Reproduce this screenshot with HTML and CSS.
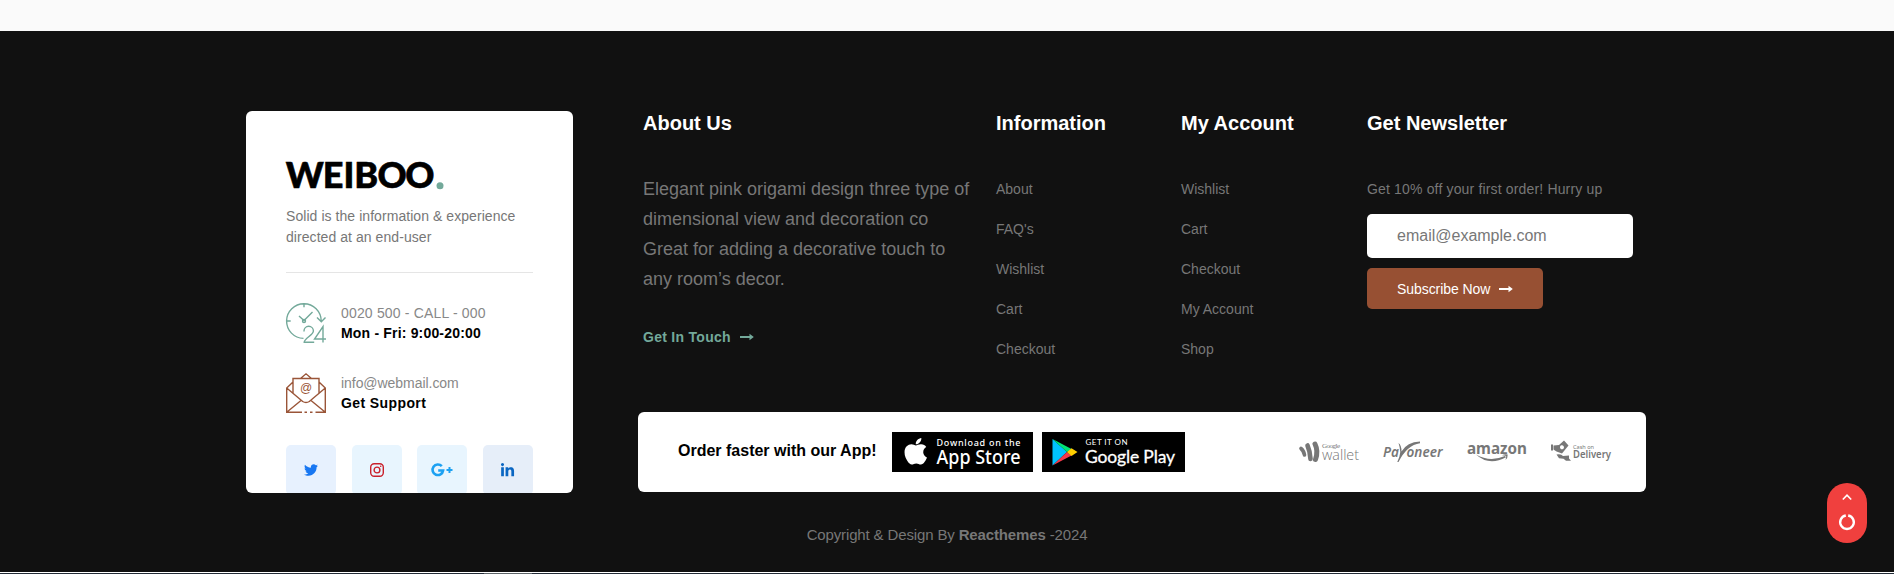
FILE: index.html
```html
<!DOCTYPE html>
<html lang="en">
<head>
<meta charset="utf-8">
<title>Weiboo</title>
<link rel="stylesheet" href="styles.css">
</head>
<body>
<footer class="footer">
  <div class="footer-inner">
    <aside class="contact-card">
      <svg class="logo" width="158" height="28" viewBox="0 0 158 28" role="img" aria-label="Weiboo">
        <text class="logo-text" x="-0.3 36.800 57.600 68.200 91.500 119.300" y="26.300">WEIBOO</text>
        <circle cx="154" cy="23.7" r="3.5" fill="#73a99a"/>
      </svg>
      <p class="tagline">Solid is the information &amp; experience directed at an end-user</p>
      <div class="contact-row">
        <svg class="contact-icon clock" width="40" height="40" viewBox="0 0 40 40">
          <path d="M17.5 35.4A17.3 17.3 0 1 1 35.2 18M31 14.5l4.3 4.2 4.2-4.2M18 .7v3.6M.7 18h4M13 13l5 4.5 8.500-8.500M18 28.500v-.5a4.700 4.700 0 0 1 9.400 0c0 4-9.200 7.500-9.200 11.300h10M37 39.500V23.500l-8.500 12.500H40"/>
          <circle cx="18" cy="18" r="1.500"/>
        </svg>
        <div class="contact-text"><span>0020 500 - CALL - 000</span><strong>Mon - Fri: 9:00-20:00</strong></div>
      </div>
      <div class="contact-row">
        <svg class="contact-icon mail" width="40" height="40" viewBox="0 0 40 40">
          <path d="M14.500 5.500 20 .8l5.500 4.700M7 20V5.500h26V20M7 9 .7 15v24.300H14M33 9l6.300 6v24.300H32M.7 15l16 13.500q3.300 2 6.600 0l16-13.500M.7 39.300 15 27.500M39.300 39.300 25 27.500M14 39.300h2M18.500 39.300h2.500M24 39.300h2.500M29.500 39.300h2.500"/>
          <text class="at" x="20" y="18.700" text-anchor="middle">@</text>
        </svg>
        <div class="contact-text support"><span>info@webmail.com</span><strong>Get Support</strong></div>
      </div>
      <div class="socials">
        <a class="social twitter"><svg width="14" height="14" viewBox="0 0 512 512"><path fill="#1877f2" d="M459.370 151.716c.325 4.548.325 9.097.325 13.645 0 138.720-105.583 298.558-298.558 298.558-59.452 0-114.680-17.219-161.137-47.106 8.447.974 16.568 1.299 25.340 1.299 49.055 0 94.213-16.568 130.274-44.832-46.132-.975-84.792-31.188-98.112-72.772 6.498.974 12.995 1.624 19.818 1.624 9.421 0 18.843-1.300 27.614-3.573-48.081-9.747-84.143-51.980-84.143-102.985v-1.299c13.969 7.797 30.214 12.670 47.431 13.319-28.264-18.843-46.781-51.005-46.781-87.391 0-19.492 5.197-37.360 14.294-52.954 51.655 63.675 129.300 105.258 216.365 109.807-1.624-7.797-2.599-15.918-2.599-24.040 0-57.828 46.782-104.934 104.934-104.934 30.213 0 57.502 12.670 76.670 33.137 23.715-4.548 46.456-13.320 66.599-25.340-7.798 24.366-24.366 44.833-46.132 57.827 21.117-2.273 41.584-8.122 60.426-16.243-14.292 20.791-32.161 39.308-52.628 54.253z"/></svg></a>
        <a class="social instagram"><svg width="14" height="14" viewBox="0 0 14 14" fill="none" stroke="#c9202b" stroke-width="1.400"><rect x=".7" y=".7" width="12.600" height="12.600" rx="3.500"/><circle cx="7" cy="7" r="2.900"/><circle cx="10.700" cy="3.300" r=".8" fill="#c9202b" stroke="none"/></svg></a>
        <a class="social google"><svg width="22" height="14" viewBox="0 0 22 14" fill="none" stroke="#1da1f2"><path stroke-width="2.600" d="M10.800 3.200A5.300 5.300 0 1 0 12.100 7.500H7.200"/><path stroke-width="2" d="M18.500 4v6M15.500 7h6"/></svg></a>
        <a class="social linkedin"><svg width="15" height="15" viewBox="0 0 448 512"><path fill="#0a66c2" d="M100.280 448H7.400V148.900h92.880zM53.790 108.100C24.090 108.100 0 83.500 0 53.800a53.790 53.790 0 0 1 107.580 0c0 29.700-24.100 54.300-53.790 54.300zM447.900 448h-92.680V302.400c0-34.700-.7-79.200-48.290-79.200-48.290 0-55.690 37.700-55.690 76.700V448h-92.780V148.900h89.080v40.800h1.300c12.400-23.500 42.690-48.300 87.880-48.300 94 0 111.280 61.900 111.280 142.300V448z"/></svg></a>
      </div>
    </aside>
    <div class="main">
      <div class="columns">
        <section class="about">
          <h3>About Us</h3>
          <p>Elegant pink origami design three type of dimensional view and decoration co<br>Great for adding a decorative touch to any room’s decor.</p>
          <a class="touch">Get In Touch <svg class="arrow" width="14" height="8" viewBox="0 0 14 8"><path d="M0 3h9.500V.8L13.800 4 9.500 7.200V5H0z" fill="currentColor"/></svg></a>
        </section>
        <section>
          <h3>Information</h3>
          <ul><li>About</li><li>FAQ's</li><li>Wishlist</li><li>Cart</li><li>Checkout</li></ul>
        </section>
        <section>
          <h3>My Account</h3>
          <ul><li>Wishlist</li><li>Cart</li><li>Checkout</li><li>My Account</li><li>Shop</li></ul>
        </section>
        <section>
          <h3>Get Newsletter</h3>
          <p class="offer">Get 10% off your first order! Hurry up</p>
          <input class="email" type="email" placeholder="email@example.com">
          <button class="subscribe">Subscribe Now <svg class="arrow" width="14" height="8" viewBox="0 0 14 8"><path d="M0 3h9.500V.8L13.800 4 9.500 7.200V5H0z" fill="currentColor"/></svg></button>
        </section>
      </div>
      <div class="app-bar">
        <strong class="app-label">Order faster with our App!</strong>
        <svg class="store" width="141" height="40" viewBox="0 0 141 40">
          <rect width="141" height="40"/>
          <g fill="#fff">
            <path transform="translate(12.300 4) scale(.0595)" d="M318.700 268.700c-.2-36.700 16.400-64.400 50-84.800-18.800-26.900-47.200-41.700-84.700-44.600-35.500-2.800-74.300 20.700-88.500 20.700-15 0-49.400-19.700-76.400-19.700C63.300 141.200 4 184.800 4 273.500q0 39.300 14.400 81.200c12.800 36.700 59 126.700 107.200 125.200 25.200-.6 43-17.900 75.800-17.900 31.800 0 48.300 17.900 76.400 17.900 48.600-.7 90.400-82.500 102.600-119.300-65.200-30.700-61.700-90-61.700-91.900zm-56.600-164.200c27.300-32.400 24.800-61.900 24-72.500-24.100 1.400-52 16.400-67.900 34.900-17.500 19.800-27.800 44.300-25.600 71.900 26.100 2 49.900-11.400 69.500-34.300z"/>
            <text class="noto" x="44.500" y="13.500" font-size="9" font-weight="500" textLength="84">Download on the</text>
            <text class="noto" x="44.500" y="32" font-size="19" font-weight="500" textLength="84" lengthAdjust="spacingAndGlyphs">App Store</text>
          </g>
        </svg>
        <svg class="store" width="143" height="40" viewBox="0 0 143 40">
          <rect width="143" height="40"/>
          <path fill="#00c3ff" d="M10.500 7v26.500L25 20z"/><path fill="#00e576" d="M10.500 7 25 20l4.500-3z"/><path fill="#f5384b" d="M10.500 33.500 25 20l4.500 3.500z"/><path fill="#ffce00" d="M29.500 16.300 35.500 20l-6 4-4.500-4z"/>
          <g fill="#fff">
            <text class="lato" x="43.500" y="13" font-size="8" textLength="42">GET IT ON</text>
            <text class="lato" x="43" y="30.500" font-size="17.500" textLength="90" stroke="#fff" stroke-width=".3">Google Play</text>
          </g>
        </svg>
        <div class="payments">
          <svg width="60" height="24" viewBox="0 0 60 24">
            <g fill="none" stroke="#777" stroke-linecap="round"><path stroke-width="3.600" d="M2 8.500Q5 11 5.500 15"/><path stroke-width="4.600" d="M8.500 5.500Q11 11 11.500 19"/><path stroke-width="5" d="M16 4q3.500 7 .5 15.500"/></g>
            <text class="serif" x="23" y="7.500" font-size="7" textLength="18">Google</text><text class="open" x="23" y="19.500" font-size="15" font-weight="300" textLength="37" lengthAdjust="spacingAndGlyphs">wallet</text>
          </svg>
          <svg width="60" height="24" viewBox="0 0 60 24">
            <text class="noto" x="0" y="17" font-size="14" font-weight="600" font-style="italic" textLength="16" lengthAdjust="spacingAndGlyphs">Pa</text><text class="noto" x="23.500" y="17" font-size="14" font-weight="600" font-style="italic" textLength="36" lengthAdjust="spacingAndGlyphs">oneer</text>
            <path d="M15.500 3q3 2 3 8.500Q24 2 37 1.500v1.700Q24 5 15.500 22h-1.200q2.500-5 3-10-.5-5.500-1.800-9z"/>
          </svg>
          <svg width="60" height="24" viewBox="0 0 60 24">
            <text class="noto" x="0" y="13.500" font-size="16" font-weight="700" textLength="60" lengthAdjust="spacingAndGlyphs">amazon</text>
            <path d="M9 14.500q14 8 29 1.500l1 1.300Q22 26.500 9 14.500zM35 15.300q3-1.700 5.700-.8.200 3.500-2.200 5.500.8-2.500.7-4-1.500-.7-4.200-.7z"/>
          </svg>
          <svg width="60" height="24" viewBox="0 0 60 24">
            <path fill-rule="evenodd" d="M0 4.500h2v6H0zM2.500 5.500 8 5l5-4.500 4.500 5-6.500 8-5.500-2-3-2zM9 7a2 2 0 1 0 3.500-1A2 2 0 0 0 9 7zM5.500 14.500q4.500-1 6.500 1.500l6-.5v3l2 2.200h-5l-2.500-2-4.500-.5z"/>
            <text class="noto" x="22" y="9" font-size="6" textLength="21" lengthAdjust="spacingAndGlyphs">Cash on</text><text class="noto" x="22" y="18.300" font-size="10" font-weight="600" textLength="38" lengthAdjust="spacingAndGlyphs">Delivery</text>
          </svg>
        </div>
      </div>
    </div>
  </div>
  <p class="copyright">Copyright &amp; Design By <strong>Reacthemes</strong> -2024</p>
</footer>
<div class="bottom-edge"><span></span></div>
<button class="to-top" aria-label="Back to top">
  <svg width="40" height="60" viewBox="0 0 40 60" fill="none" stroke="#fff"><path stroke-width="1.600" d="m15.800 16.500 4.200-4.300 4.200 4.300"/><path stroke-width="2.400" d="M21.200 32.500a6.800 6.800 0 1 1-2.400 0"/></svg>
</button>
</body>
</html>
```
FILE: styles.css
```css
* { box-sizing: border-box; }
body { margin: 0; height: 574px; padding-top: 31px; overflow: hidden; background: #fafafa; font-family: "Liberation Sans", Arial, sans-serif; font-size: 14px; color: #777; }
h3, p, ul { margin: 0; padding: 0; }
ul { list-style: none; }
svg { display: block; flex: none; overflow: visible; }
.footer { height: 541px; padding-top: 80px; background: #111; }
.footer-inner { display: flex; gap: 65px; margin-left: 246px; width: 1400px; }
.contact-card { width: 327px; height: 382px; padding: 51px 40px 0; overflow: hidden; background: #fff; border-radius: 6px; }
.logo-text { font-family: Lato, sans-serif; font-weight: 900; font-size: 36px; fill: #000; stroke: #000; stroke-width: .6px; }
.tagline { padding: 16px 0 24px; line-height: 21px; letter-spacing: .06px; border-bottom: 1px solid #e5e5e5; }
.contact-row { display: flex; gap: 15px; margin-top: 30px; height: 40px; }
.contact-icon { fill: none; stroke-width: 1.4; }
.clock { stroke: #73a99a; }
.mail { stroke: #9a5538; }
.at { font-size: 12px; fill: #9a5538; stroke: none; }
.contact-text { display: flex; flex-direction: column; line-height: 20px; }
.contact-text span { color: #888; letter-spacing: .17px; }
.contact-text strong { color: #000; letter-spacing: .18px; }
.support span { letter-spacing: -.05px; }
.support strong { letter-spacing: .4px; }
.socials { display: flex; justify-content: space-between; margin-top: 32px; }
.social { display: flex; align-items: center; justify-content: center; width: 50px; height: 50px; border-radius: 5px; }
.twitter { background: #e7f1fe; }
.instagram, .google { background: #e8f5fe; }
.linkedin { background: #e6eef9; }
.main { width: 1008px; }
.columns { display: grid; grid-template-columns: 353px 185px 186px 266px; height: 301px; padding-left: 5px; }
h3 { height: 24px; line-height: 24px; font-size: 20px; color: #fff; }
.about p { width: 335px; margin-top: 39px; font-size: 18px; line-height: 30px; }
.touch { display: flex; align-items: center; gap: 9px; margin-top: 33px; line-height: 20px; font-weight: 700; letter-spacing: .28px; color: #73a99a; }
li { height: 40px; line-height: 20px; }
ul, .offer { margin-top: 44px; }
.offer { line-height: 20px; letter-spacing: .16px; }
.email { display: block; width: 266px; height: 44px; margin-top: 15px; padding: 0 30px; border: 0; border-radius: 5px; font: 16px "Liberation Sans", Arial, sans-serif; }
.email::placeholder { color: #777; }
.subscribe { display: flex; align-items: center; gap: 9px; width: 176px; height: 41px; margin-top: 10px; padding: 0 30px; border: 0; border-radius: 5px; background: #975033; color: #fff; font: 14px "Liberation Sans", Arial, sans-serif; letter-spacing: -.07px; white-space: nowrap; }
.app-bar { display: flex; align-items: center; height: 80px; padding: 0 35px 0 40px; border-radius: 6px; background: #fff; }
.app-label { width: 214px; padding-bottom: 2px; font-size: 16px; color: #000; white-space: nowrap; }
.store + .store { margin-left: 9px; }
.noto { font-family: "Noto Sans", sans-serif; }
.lato { font-family: Lato, sans-serif; }
.open { font-family: "Open Sans", sans-serif; }
.serif { font-family: "Liberation Serif", serif; }
.payments { display: flex; gap: 24px; margin-left: auto; fill: #777; }
.copyright { margin-top: 32px; text-align: center; font-size: 15px; line-height: 20px; letter-spacing: -.14px; }
.bottom-edge { height: 2px; border-top: 1px solid #fff; background: #222b36; }
.bottom-edge span { display: block; width: 48px; height: 1px; margin-left: 484px; background: #5d6468; }
.to-top { position: fixed; right: 27px; bottom: 31px; width: 40px; height: 60px; padding: 0; border: 0; border-radius: 20px; background: #f0403e; }
```
